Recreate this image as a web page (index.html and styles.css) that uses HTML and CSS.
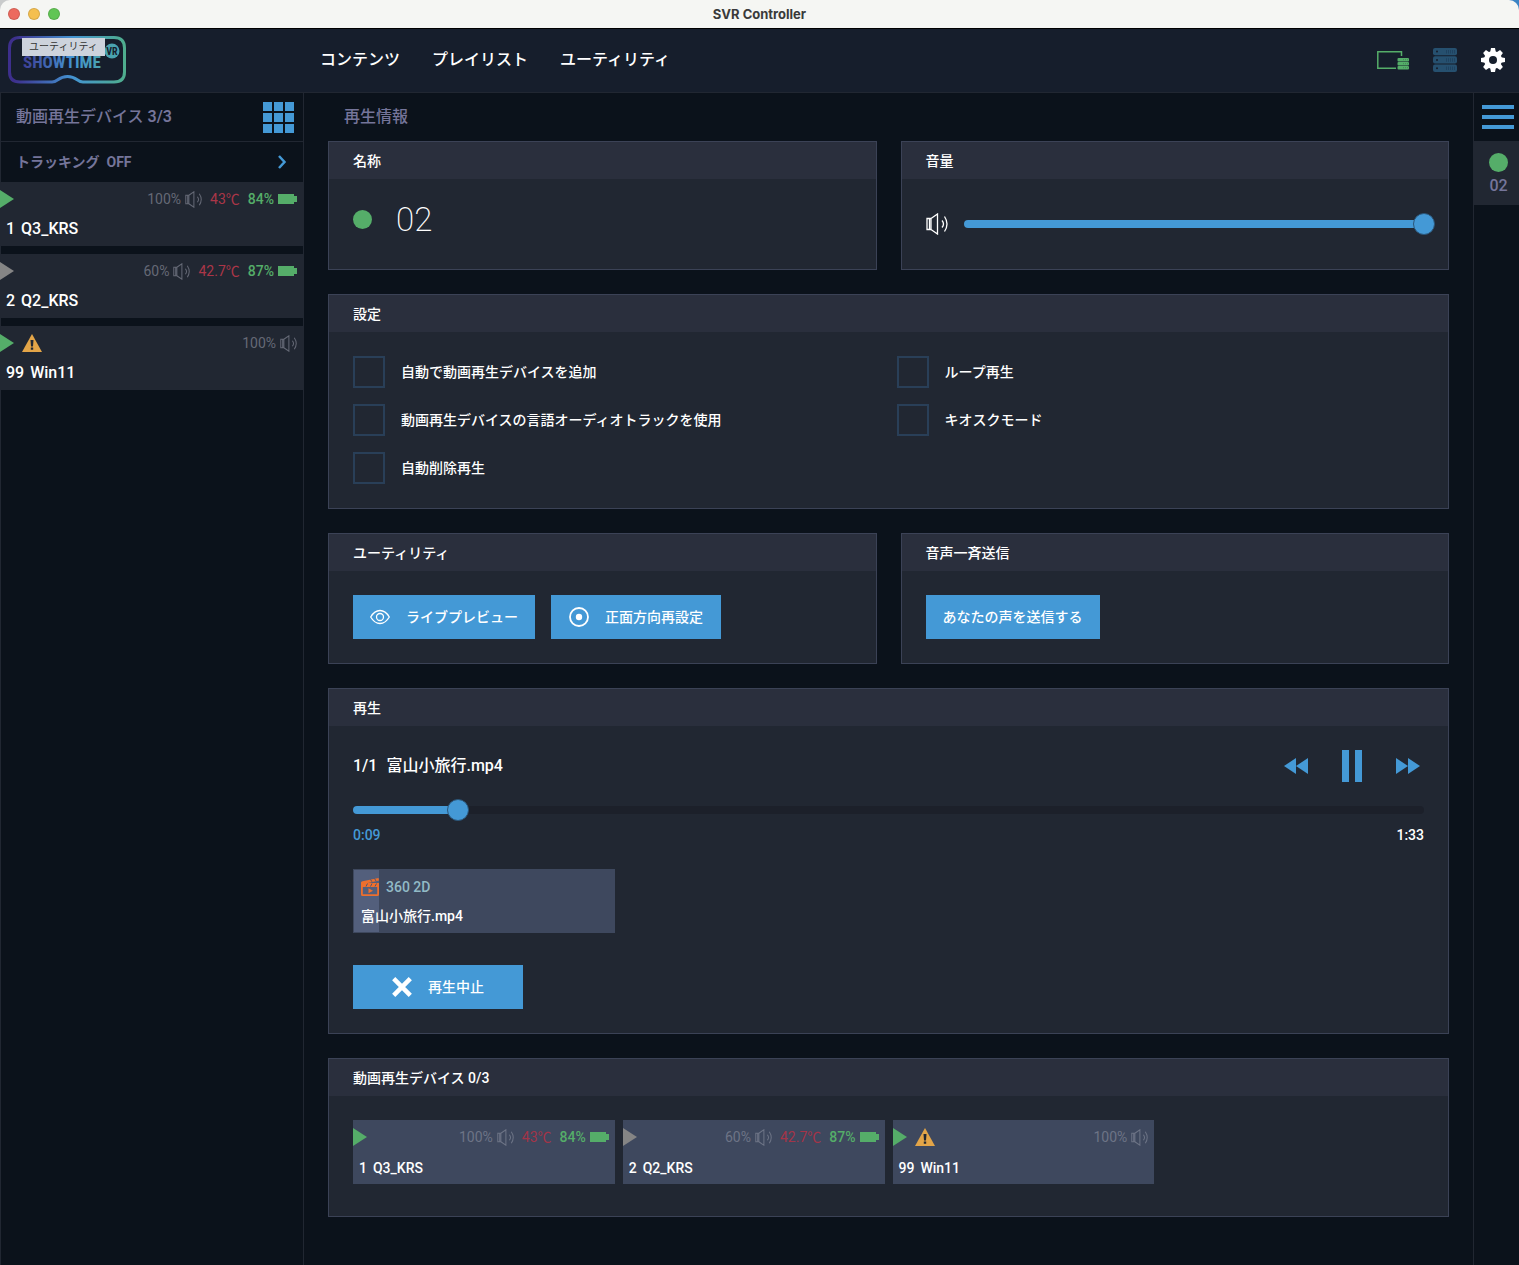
FILE: index.html
```html
<!DOCTYPE html>
<html lang="ja">
<head>
<meta charset="utf-8">
<meta name="viewport" content="width=device-width, initial-scale=1">
<title>SVR Controller</title>
<link rel="stylesheet" href="styles.css">
</head>
<body>
<svg class="sprite" aria-hidden="true">
  <symbol id="speaker" viewBox="0 0 22 22">
    <path d="M1 5.500h4v11H1zM5 5.500L11.500 1v20L5 16.500M3.500 5.500v11" />
    <path d="M16 7.500q3 3.500 0 7M18.500 3.500q5 7.500 0 15" />
  </symbol>
  <symbol id="battery" viewBox="0 0 19 12"><path d="M0 1h16v2h3v6h-3v2H0z" /></symbol>
  <symbol id="play" viewBox="0 0 14 18"><path d="M0 0l14 9L0 18z" /></symbol>
  <symbol id="warning" viewBox="0 0 20 18">
    <path fill="#e3a548" d="M10 0l10 18H0z" />
    <path fill="#212732" d="M8.500 6h3l-.5 6.500H9zM8.800 13.500h2.400v2.200H8.800z" />
  </symbol>
</svg>

<div class="titlebar">
  <div class="lights"><span class="light red"></span><span class="light yellow"></span><span class="light green"></span></div>
  <h1 class="window-title">SVR Controller</h1>
</div>

<header class="topbar">
  <div class="brand">
    <svg class="logo" viewBox="0 0 118 48" role="img" aria-label="Showtime VR">
      <defs>
        <linearGradient id="brandFill" gradientUnits="userSpaceOnUse" x1="0" y1="0" x2="118" y2="0">
          <stop offset="0.05" stop-color="#3d2f8c" /><stop offset="0.55" stop-color="#4494d2" /><stop offset="1" stop-color="#4fae8c" />
        </linearGradient>
      </defs>
      <path fill="none" stroke="url(#brandFill)" stroke-width="3" d="M12 1.500H106Q116.500 1.500 116.500 12V36Q116.500 46 106 46H75C69 46 69 40.500 59.500 40.500S50 46 44 46H12Q1.500 46 1.500 36V12Q1.500 1.500 12 1.500Z" />
      <text class="logo-word" x="15" y="32" fill="url(#brandFill)">SHOWTIME</text>
      <circle cx="104" cy="15" r="7.500" fill="#4aa3b0" />
      <text class="logo-vr" x="104" y="19" text-anchor="middle">VR</text>
    </svg>
    <span class="tooltip" role="tooltip">ユーティリティ</span>
  </div>
  <nav class="nav">
    <a href="#contents">コンテンツ</a>
    <a href="#playlist">プレイリスト</a>
    <a href="#utility">ユーティリティ</a>
  </nav>
  <div class="tools">
    <button class="tool" aria-label="接続">
      <svg width="32" height="24" viewBox="0 0 32 24">
        <path fill="none" stroke="#55ad69" stroke-width="1.500" d="M24.500 8V3.700H.8V20.300H19" />
        <g fill="#55ad69"><rect x="20.500" y="10" width="11.500" height="3.400" rx="1" /><rect x="20.500" y="14" width="11.500" height="3.400" rx="1" /><rect x="20.500" y="18" width="11.500" height="3.400" rx="1" /></g>
        <path stroke="#3c7f52" stroke-width=".8" stroke-dasharray="1 1" d="M26 11.700h5M26 15.700h5M26 19.700h5" />
      </svg>
    </button>
    <button class="tool" aria-label="サーバー">
      <svg width="24" height="24" viewBox="0 0 24 24">
        <g fill="#26506f"><rect width="24" height="7.300" rx="2" /><rect y="8.300" width="24" height="7.300" rx="2" /><rect y="16.600" width="24" height="7.300" rx="2" /></g>
        <g fill="#161e2c"><circle cx="4" cy="3.600" r="1" /><circle cx="4" cy="11.900" r="1" /><circle cx="4" cy="20.200" r="1" /></g>
        <path stroke="#1f4260" stroke-width="3.500" stroke-dasharray="1 1" d="M13 3.700h9M13 12h9M13 20.300h9" />
      </svg>
    </button>
    <button class="tool" aria-label="設定">
      <svg width="24" height="24" viewBox="-12 -12 24 24">
        <g fill="#fff">
          <circle r="9" />
          <path id="tooth" d="M-2.800-8L-2-12H2L2.800-8V8L2 12H-2L-2.800 8z" />
          <use href="#tooth" transform="rotate(45)" /><use href="#tooth" transform="rotate(90)" /><use href="#tooth" transform="rotate(135)" />
        </g>
        <circle r="4" fill="#161e2c" />
      </svg>
    </button>
  </div>
</header>

<div class="workspace">
  <aside class="sidebar">
    <div class="sidebar-head">
      <h2 class="section-title">動画再生デバイス <b>3/3</b></h2>
      <button class="grid-button" aria-label="グリッド表示"><i></i><i></i><i></i><i></i><i></i><i></i><i></i><i></i><i></i></button>
    </div>
    <button class="tracking"><span>トラッキング&nbsp; OFF</span>
      <svg width="10" height="14" viewBox="0 0 10 14"><path fill="none" stroke="#4499d6" stroke-width="2.500" d="M2 1l5.500 6L2 13" /></svg>
    </button>
    <ul class="device-list">
      <li class="device">
        <div class="status">
          <svg class="play on"><use href="#play" /></svg>
          <span class="stat">100%<svg class="speaker"><use href="#speaker" /></svg></span>
          <span class="stat temp">43℃</span>
          <span class="stat power">84%<svg class="battery"><use href="#battery" /></svg></span>
        </div>
        <div class="device-name"><span>1</span><span>Q3_KRS</span></div>
      </li>
      <li class="device">
        <div class="status">
          <svg class="play"><use href="#play" /></svg>
          <span class="stat">60%<svg class="speaker"><use href="#speaker" /></svg></span>
          <span class="stat temp">42.7℃</span>
          <span class="stat power">87%<svg class="battery"><use href="#battery" /></svg></span>
        </div>
        <div class="device-name"><span>2</span><span>Q2_KRS</span></div>
      </li>
      <li class="device">
        <div class="status">
          <svg class="play on"><use href="#play" /></svg>
          <svg class="warning"><use href="#warning" /></svg>
          <span class="stat">100%<svg class="speaker"><use href="#speaker" /></svg></span>
        </div>
        <div class="device-name"><span>99</span><span>Win11</span></div>
      </li>
    </ul>
  </aside>

  <main class="main">
    <h2 class="section-title main-title">再生情報</h2>
    <div class="cards">
      <div class="pair">
        <section class="card">
          <h3 class="card-head">名称</h3>
          <div class="card-body name-row"><span class="dot"></span><span class="group-name">02</span></div>
        </section>
        <section class="card">
          <h3 class="card-head"><label for="volume">音量</label></h3>
          <div class="card-body volume-row">
            <svg class="speaker-large"><use href="#speaker" /></svg>
            <div class="slider"><div class="track"><div class="fill" style="width:100%"></div></div><input type="range" id="volume" min="0" max="100" value="100"></div>
          </div>
        </section>
      </div>

      <section class="card">
        <h3 class="card-head">設定</h3>
        <div class="card-body options">
          <label class="option"><input type="checkbox">自動で動画再生デバイスを追加</label>
          <label class="option"><input type="checkbox">ループ再生</label>
          <label class="option"><input type="checkbox">動画再生デバイスの言語オーディオトラックを使用</label>
          <label class="option"><input type="checkbox">キオスクモード</label>
          <label class="option"><input type="checkbox">自動削除再生</label>
        </div>
      </section>

      <div class="pair">
        <section class="card">
          <h3 class="card-head">ユーティリティ</h3>
          <div class="card-body actions">
            <button class="button">
              <svg width="20" height="20" viewBox="0 0 20 20" fill="none" stroke="#fff" stroke-width="1.300"><path d="M.7 10Q4.500 3.500 10 3.500T19.300 10Q15.500 16.500 10 16.500T.7 10z" /><circle cx="10" cy="10" r="3.500" /></svg>
              ライブプレビュー
            </button>
            <button class="button">
              <svg width="20" height="20" viewBox="0 0 20 20"><circle cx="10" cy="10" r="9" fill="none" stroke="#fff" stroke-width="1.800" /><circle cx="10" cy="10" r="3.200" fill="#fff" /></svg>
              正面方向再設定
            </button>
          </div>
        </section>
        <section class="card">
          <h3 class="card-head">音声一斉送信</h3>
          <div class="card-body actions"><button class="button">あなたの声を送信する</button></div>
        </section>
      </div>

      <section class="card">
        <h3 class="card-head">再生</h3>
        <div class="card-body">
          <div class="player-head">
            <p class="now-playing"><span>1/1</span><span>富山小旅行.mp4</span></p>
            <div class="transport">
              <button aria-label="前へ"><svg width="24" height="16" viewBox="0 0 24 16"><path d="M12 0v16L0 8zM24 0v16L12 8z" /></svg></button>
              <button aria-label="一時停止"><svg width="20" height="32" viewBox="0 0 20 32"><path d="M0 0h7v32H0zM13 0h7v32h-7z" /></svg></button>
              <button aria-label="次へ"><svg width="24" height="16" viewBox="0 0 24 16"><path d="M0 0v16l12-8zM12 0v16l12-8z" /></svg></button>
            </div>
          </div>
          <div class="slider seek"><div class="track"><div class="fill" style="width:9.8%"></div></div><input type="range" aria-label="再生位置" min="0" max="100" step="0.1" value="9.8"></div>
          <div class="times"><span class="elapsed">0:09</span><span>1:33</span></div>
          <div class="tiles">
            <div class="tile clip">
              <div class="clip-progress" style="width:9.8%"></div>
              <div class="clip-kind">
                <svg width="18" height="18" viewBox="0 0 18 18">
                  <path fill="#ee6f2d" fill-rule="evenodd" d="M0 4.500Q0 3.500 1.500 3.300L17.500 0 18 2.500 7 5H18V16.500Q18 18 16.500 18H1.500Q0 18 0 16.500zM1.800 9V16.200H16.200V9z" />
                  <path fill="#ee6f2d" d="M7.500 10.200l4.500 2.500-4.500 2.500z" />
                  <path stroke="#4c5772" d="M5 8.500l1.500-3M9.500 8.500L11 5.500M14 8.500l1.500-3M11 3.800L9.500 1.500M15 3L13.500.5" />
                </svg>
                360 2D
              </div>
              <div class="clip-name">富山小旅行.mp4</div>
            </div>
          </div>
          <button class="button stop">
            <svg width="20" height="20" viewBox="0 0 20 20"><path stroke="#fff" stroke-width="4.500" d="M1.700 1.700l16.600 16.600M18.300 1.700L1.700 18.300" /></svg>
            再生中止
          </button>
        </div>
      </section>

      <section class="card">
        <h3 class="card-head">動画再生デバイス 0/3</h3>
        <div class="card-body">
          <ul class="tiles">
            <li class="device tile">
              <div class="status">
                <svg class="play on"><use href="#play" /></svg>
                <span class="stat">100%<svg class="speaker"><use href="#speaker" /></svg></span>
                <span class="stat temp">43℃</span>
                <span class="stat power">84%<svg class="battery"><use href="#battery" /></svg></span>
              </div>
              <div class="device-name"><span>1</span><span>Q3_KRS</span></div>
            </li>
            <li class="device tile">
              <div class="status">
                <svg class="play"><use href="#play" /></svg>
                <span class="stat">60%<svg class="speaker"><use href="#speaker" /></svg></span>
                <span class="stat temp">42.7℃</span>
                <span class="stat power">87%<svg class="battery"><use href="#battery" /></svg></span>
              </div>
              <div class="device-name"><span>2</span><span>Q2_KRS</span></div>
            </li>
            <li class="device tile">
              <div class="status">
                <svg class="play on"><use href="#play" /></svg>
                <svg class="warning"><use href="#warning" /></svg>
                <span class="stat">100%<svg class="speaker"><use href="#speaker" /></svg></span>
              </div>
              <div class="device-name"><span>99</span><span>Win11</span></div>
            </li>
          </ul>
        </div>
      </section>
    </div>
  </main>

  <aside class="rail">
    <button class="menu-button" aria-label="メニュー"><i></i><i></i><i></i></button>
    <button class="rail-item"><span class="dot"></span>02</button>
  </aside>
</div>
</body>
</html>
```
FILE: styles.css
```css
:root {
  --bg: #0b121b;
  --bar: #161e2c;
  --line: #212732;
  --card: #212732;
  --card-head: #2a2f3d;
  --card-line: #3b4256;
  --tile: #3e485e;
  --blue: #4499d6;
  --green: #55ad69;
  --muted: #75759a;
}

* { box-sizing: border-box; }

html { background: linear-gradient(90deg, #c9cbcb 50%, #3b84c4 50%) no-repeat 0 0 / 100% 28px, var(--bg); }

body {
  margin: 0;
  min-height: 100vh;
  display: flex;
  flex-direction: column;
  color: #fff;
  font: 500 14px/20px Roboto, "Noto Sans CJK JP", sans-serif;
}

h1, h2, h3, p, ul { margin: 0; padding: 0; font: inherit; list-style: none; }

button { margin: 0; padding: 0; border: 0; background: none; color: inherit; font: inherit; cursor: pointer; }

svg { display: block; flex: none; }

.sprite { position: absolute; width: 0; height: 0; }

/* window frame */
.titlebar {
  display: grid;
  grid-template-columns: 1fr auto 1fr;
  align-items: center;
  height: 28px;
  padding: 0 8px;
  border-radius: 10px 10px 0 0;
  background: #f5f6f3;
}
.lights { display: flex; gap: 8px; }
.light { width: 12px; height: 12px; border-radius: 50%; border: 1px solid rgba(0, 0, 0, .12); }
.red { background: #ec6a5e; }
.yellow { background: #f4bf4f; }
.green { background: #61c554; }
.window-title { color: #3a3a3a; font: 700 13px/16px Inter, sans-serif; }

/* top bar */
.topbar {
  display: flex;
  align-items: center;
  height: 65px;
  padding-bottom: 1px;
  border-top: 1px solid #000;
  border-bottom: 1px solid var(--line);
  background: var(--bar);
}
.brand { position: relative; flex: none; width: 320px; padding-left: 8px; }
.logo { width: 118px; height: 48px; }
.logo-word { font: 700 17px "Liberation Sans Narrow", "Roboto Condensed", sans-serif; }
.logo-vr { font: 700 10px "Liberation Sans Narrow", "Roboto Condensed", sans-serif; fill: #161e2c; }
.tooltip {
  position: absolute;
  left: 22px;
  top: 2px;
  padding: 0 7px;
  background: #cdd3dc;
  color: #333;
  font-size: 10px;
  font-weight: 400;
  line-height: 18px;
}
.nav { display: flex; flex: 1; gap: 32px; font-size: 16px; line-height: 24px; }
.nav a { color: inherit; text-decoration: none; }
.tools { display: flex; gap: 24px; padding-right: 14px; }

/* columns */
.workspace { display: flex; flex: 1; }
.sidebar { flex: none; width: 304px; border-right: 1px solid var(--line); box-shadow: inset 1px 0 var(--line); }
.main { flex: 1; min-width: 0; padding: 0 24px 48px; }
.rail { flex: none; width: 46px; border-left: 1px solid var(--line); }

.section-title { color: var(--muted); font-size: 16px; line-height: 48px; }
.section-title b { font-weight: 600; }
.main-title { padding-left: 16px; }

/* sidebar */
.sidebar-head {
  display: flex;
  align-items: center;
  justify-content: space-between;
  height: 49px;
  padding: 0 9px 0 16px;
  border-bottom: 1px solid var(--line);
}
.grid-button { display: grid; grid-template-columns: repeat(3, 9px); gap: 2px; }
.grid-button i { height: 9px; background: var(--blue); }
.tracking {
  display: flex;
  align-items: center;
  justify-content: space-between;
  width: 100%;
  height: 40px;
  padding: 0 16px;
  color: var(--muted);
  font-weight: 700;
}
.device-list { display: grid; gap: 8px; }

/* device */
.device { height: 64px; padding: 8px 6px 0 0; background: var(--card); }
.status { display: flex; align-items: center; gap: 8px; height: 18px; }
.play { width: 14px; height: 18px; margin-right: auto; fill: #858585; }
.play.on { fill: var(--green); }
.play:has(+ .warning) { margin-right: 0; }
.warning { width: 20px; height: 18px; margin-right: auto; }
.stat { display: flex; align-items: center; gap: 4px; color: #656976; font-weight: 400; }
.stat.temp { color: #ab3648; }
.stat.power { color: var(--green); font-weight: 500; }
.speaker { width: 17px; height: 17px; fill: none; stroke: #656976; stroke-width: 1.3; }
.battery { width: 19px; height: 12px; fill: var(--green); }
.device-name { display: flex; gap: 6px; padding: 9px 0 0 6px; font-size: 16px; line-height: 24px; }

/* cards */
.cards { display: grid; gap: 24px; }
.pair { display: grid; grid-template-columns: 1fr 1fr; gap: 24px; }
.card { display: flex; flex-direction: column; border: 1px solid var(--card-line); background: var(--card); }
.card-head { padding: 1px 24px 0; background: var(--card-head); line-height: 36px; }
.card-body { flex: 1; padding: 24px; }

.name-row { display: flex; align-items: flex-start; gap: 24px; min-height: 90px; }
.dot { display: block; width: 19px; height: 19px; border-radius: 50%; background: var(--green); }
.name-row .dot { margin-top: 7px; }
.group-name { font-size: 33px; line-height: 34px; font-weight: 200; }

.volume-row { display: flex; align-items: center; gap: 16px; }
.speaker-large { width: 22px; height: 22px; fill: none; stroke: #fff; stroke-width: 1.3; }

/* sliders */
.slider { display: grid; flex: 1; align-items: center; height: 24px; }
.slider > * { grid-area: 1 / 1; }
.track { height: 8px; border-radius: 4px; background: #1c202a; }
.fill { height: 8px; border-radius: 4px; background: var(--blue); }
.slider input { appearance: none; width: auto; height: 22px; margin: 0 -11px; background: none; cursor: pointer; }
.slider input::-webkit-slider-thumb {
  appearance: none;
  width: 22px;
  height: 22px;
  border: 1px solid #2b5578;
  border-radius: 50%;
  background: var(--blue);
}

/* options */
.options { display: grid; grid-template-columns: 1fr 1fr; gap: 16px; }
.option { display: flex; align-items: center; gap: 16px; height: 32px; }
.option input { appearance: none; width: 32px; height: 32px; margin: 0; border: 2px solid #293f58; }
.option input:checked { background: var(--blue); }

/* buttons */
.actions { display: flex; gap: 16px; }
.button {
  display: flex;
  align-items: center;
  justify-content: center;
  gap: 16px;
  min-width: 170px;
  height: 44px;
  padding: 0 17px;
  background: var(--blue);
}

/* player */
.player-head { display: flex; align-items: center; justify-content: space-between; margin-bottom: 16px; }
.now-playing { display: flex; gap: 9px; font-size: 16px; line-height: 26px; }
.transport { display: flex; gap: 24px; }
.transport button { display: grid; place-items: center; width: 32px; height: 32px; fill: var(--blue); }
.times { display: flex; justify-content: space-between; margin: 3px 0 24px; }
.elapsed { color: var(--blue); }
.stop { margin-top: 24px; }

/* tiles */
.tiles { display: grid; grid-template-columns: repeat(4, 1fr); gap: 8px; padding-bottom: 8px; }
.tile { height: 64px; background: var(--tile); }
.tile .device-name { padding-top: 10px; font-size: 14px; }
.tile .stat { color: #6d7486; }
.tile .stat.temp { color: #a33448; }
.tile .stat.power { color: var(--green); }
.tile .speaker { stroke: #6d7486; }
.clip { position: relative; padding: 8px 7px 0; border: 1px solid var(--tile); }
.clip-progress { position: absolute; inset: 0 auto 0 0; background: #535f7c; }
.clip-kind { position: relative; display: flex; align-items: center; gap: 7px; height: 18px; color: #92bac6; }
.clip-name { position: relative; padding-top: 10px; }

/* right rail */
.menu-button { display: grid; gap: 6px; width: 100%; height: 48px; padding: 0 5px 0 8px; align-content: center; }
.menu-button i { height: 4px; background: var(--blue); }
.rail-item {
  display: flex;
  flex-direction: column;
  align-items: center;
  gap: 2px;
  width: 100%;
  height: 64px;
  padding: 12px 0 0 4px;
  background: var(--card);
  color: var(--muted);
  font-size: 16px;
  line-height: 24px;
}
```
